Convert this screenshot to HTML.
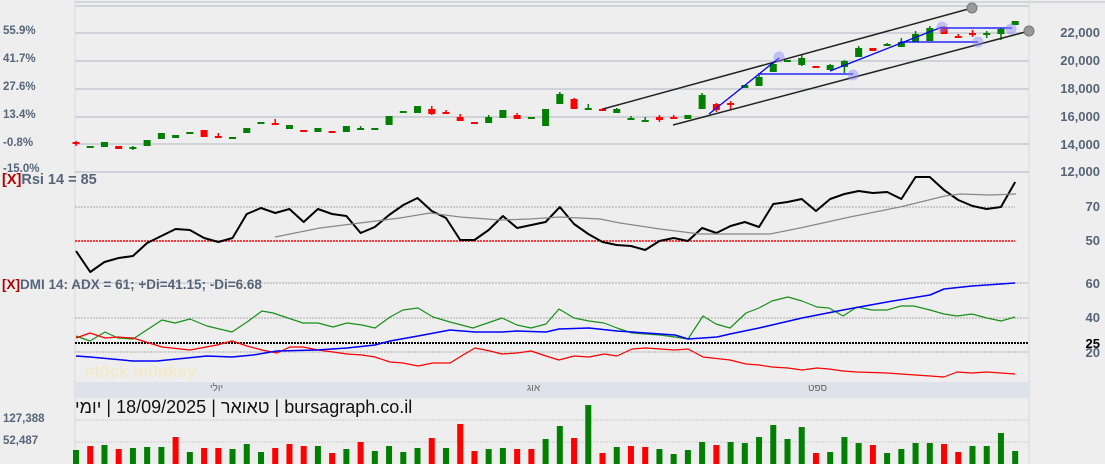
<!DOCTYPE html>
<html><head><meta charset="utf-8">
<style>
html,body{margin:0;padding:0;background:#eeeeee;}
body{width:1105px;height:464px;overflow:hidden;position:relative;font-family:"Liberation Sans",sans-serif;}
svg{position:absolute;left:0;top:0;}
.t{position:absolute;white-space:nowrap;}
.ax{font-size:13px;font-weight:bold;color:#56657a;text-align:right;width:60px;left:1040px;}
.lx{font-size:11.5px;font-weight:bold;color:#56657a;left:3px;}
.title{position:absolute;left:75px;top:397px;font-size:18px;color:#111;white-space:nowrap;}
.title span{display:inline-block;}
</style></head><body>
<svg id="s" width="1105" height="464" xmlns="http://www.w3.org/2000/svg">
<rect x="0" y="0" width="1105" height="464" fill="#eeeeee"/>
<line x1="75" y1="2" x2="1105" y2="2" stroke="#d4d6da" stroke-width="2"/>
<line x1="75" y1="0" x2="75" y2="464" stroke="#dadada" stroke-width="1"/>
<line x1="1029" y1="0" x2="1029" y2="464" stroke="#dadada" stroke-width="1"/>
<g stroke="#cfd2d8" stroke-width="2">
<line x1="75" y1="6" x2="1029" y2="6"/><line x1="75" y1="33" x2="1029" y2="33"/>
<line x1="75" y1="61" x2="1029" y2="61"/><line x1="75" y1="89" x2="1029" y2="89"/>
<line x1="75" y1="117" x2="1029" y2="117"/><line x1="75" y1="144" x2="1029" y2="144"/>
<line x1="75" y1="172" x2="1029" y2="172"/>
</g>
<g stroke="#aaa" stroke-width="1" stroke-dasharray="2,1">
<line x1="75" y1="207" x2="1015" y2="207"/>
<line x1="75" y1="283" x2="1029" y2="283"/><line x1="75" y1="318" x2="1029" y2="318"/>
<line x1="75" y1="352" x2="1029" y2="352"/>
<line x1="75" y1="420" x2="1029" y2="420" stroke="#ccc"/><line x1="75" y1="442" x2="1029" y2="442" stroke="#ccc"/>
</g>
<line x1="75" y1="241" x2="1015" y2="241" stroke="#f00" stroke-width="1.5" stroke-dasharray="2,1"/>
<line x1="75" y1="343" x2="1029" y2="343" stroke="#000" stroke-width="2" stroke-dasharray="2,1"/>
<rect x="75" y="382" width="954" height="16" fill="#dee2ea"/>
<text x="85" y="377" font-family="Liberation Sans" font-weight="bold" font-size="17" fill="#f5e6b4" opacity="0.6">st0ck m0nkey</text>
<g id="c"></g>
</svg>
<div class="t lx" style="top:25px">55.9%</div>
<div class="t lx" style="top:53px">41.7%</div>
<div class="t lx" style="top:81px">27.6%</div>
<div class="t lx" style="top:109px">13.4%</div>
<div class="t lx" style="top:137px">-0.8%</div>
<div class="t lx" style="top:163px">-15.0%</div>
<div class="t lx" style="top:413px">127,388</div>
<div class="t lx" style="top:435px">52,487</div>
<div class="t" style="left:2px;top:172px;font-size:14.5px;color:#56657a;font-weight:bold"><span style="color:#b00000">[X]</span>Rsi 14 = 85</div>
<div class="t" style="left:2px;top:277px;font-size:13.5px;color:#56657a;font-weight:bold"><span style="color:#b00000">[X]</span>DMI 14: ADX = 61; +Di=41.15; -Di=6.68</div>
<div class="t ax" style="top:25px">22,000</div>
<div class="t ax" style="top:53px">20,000</div>
<div class="t ax" style="top:81px">18,000</div>
<div class="t ax" style="top:109px">16,000</div>
<div class="t ax" style="top:137px">14,000</div>
<div class="t ax" style="top:164px">12,000</div>
<div class="t ax" style="top:199px">70</div>
<div class="t ax" style="top:233px">50</div>
<div class="t ax" style="top:276px">60</div>
<div class="t ax" style="top:310px">40</div>
<div class="t ax" style="top:336px;color:#000">25</div>
<div class="t ax" style="top:345px">20</div>
<div class="t" style="left:210px;top:383px;font-size:10px;color:#666">יולי</div>
<div class="t" style="left:527px;top:383px;font-size:10px;color:#666">אוג</div>
<div class="t" style="left:808px;top:383px;font-size:10px;color:#666">ספט</div>
<div class="title" dir="ltr"><span>יומי</span> | <span>18/09/2025</span> | <span>טאואר</span> | <span>bursagraph.co.il</span></div>
<script>
var g=document.getElementById('c'),NS='http://www.w3.org/2000/svg';
function el(t,a){var e=document.createElementNS(NS,t);for(var k in a)e.setAttribute(k,a[k]);g.appendChild(e);return e;}
function X(i){return 76+i*14.23;}
var C=[[142,144,141,146,'r'],[146,148,0,0,'g'],[142,147,0,0,'g'],[146,149,0,0,'r'],[147,149,146,150,'g'],[140,146,0,0,'g'],[133,139,0,0,'g'],[135,138,0,0,'g'],[132,134,0,0,'g'],[130,137,0,0,'r'],[136,138,133,138,'r'],[137,138,0,0,'g'],[128,133,0,0,'g'],[122,124,0,0,'g'],[123,125,119,125,'r'],[125,129,0,0,'g'],[130,131,0,0,'r'],[128,132,0,0,'g'],[131,132,0,0,'r'],[126,132,0,0,'g'],[128,130,126,130,'g'],[128,130,0,0,'g'],[116,125,0,0,'g'],[111,113,0,0,'g'],[106,113,0,0,'g'],[109,114,106,115,'r'],[112,113,110,113,'r'],[117,121,114,121,'r'],[122,124,0,0,'r'],[117,123,115,123,'g'],[110,118,0,0,'g'],[115,119,113,119,'r'],[117,119,0,0,'g'],[109,126,0,0,'g'],[94,104,92,104,'g'],[99,109,98,109,'r'],[108,109,104,109,'g'],[109,111,108,111,'r'],[109,113,108,113,'g'],[118,119,116,119,'g'],[120,121,117,121,'g'],[117,120,115,122,'r'],[117,118,115,118,'r'],[115,119,0,0,'g'],[95,109,93,109,'g'],[104,110,103,112,'r'],[103,104,101,110,'r'],[85,88,0,0,'g'],[77,86,75,86,'g'],[64,72,62,72,'g'],[60,62,0,0,'g'],[58,65,55,66,'g'],[66,68,0,0,'r'],[65,70,64,70,'g'],[61,67,60,73,'g'],[48,57,46,57,'g'],[48,51,0,0,'r'],[44,46,43,46,'g'],[42,47,38,47,'g'],[34,42,31,42,'g'],[28,41,26,41,'g'],[27,34,26,34,'r'],[36,38,34,38,'r'],[33,35,30,37,'r'],[33,35,31,38,'g'],[29,34,28,40,'g'],[21,25,0,0,'g']];
C.forEach(function(c,i){var x=X(i),col=c[4]=='g'?'#007f00':'#f00';
 if(c[2])el('line',{x1:x,x2:x,y1:c[2],y2:c[3],stroke:col,'stroke-width':1.5});
 el('rect',{x:x-3.5,y:c[0],width:7,height:Math.max(2,c[1]-c[0]),fill:col});});
var V=[[450,'g'],[446,'r'],[445,'g'],[449,'r'],[448,'g'],[447,'g'],[447,'g'],[437,'r'],[452,'g'],[448,'r'],[448,'r'],[449,'g'],[444,'g'],[452,'g'],[448,'r'],[444,'r'],[446,'r'],[446,'g'],[453,'r'],[449,'g'],[442,'r'],[451,'g'],[446,'g'],[452,'g'],[448,'g'],[438,'r'],[448,'g'],[424,'r'],[451,'r'],[449,'g'],[448,'g'],[449,'r'],[449,'r'],[439,'g'],[426,'g'],[438,'r'],[405,'g'],[453,'r'],[447,'g'],[446,'r'],[447,'r'],[449,'g'],[454,'g'],[450,'g'],[442,'g'],[445,'r'],[442,'g'],[443,'g'],[437,'g'],[425,'g'],[439,'g'],[427,'g'],[453,'r'],[452,'g'],[437,'g'],[443,'g'],[445,'r'],[453,'g'],[449,'g'],[443,'g'],[443,'g'],[444,'r'],[452,'r'],[446,'g'],[446,'g'],[433,'g'],[451,'g']];
V.forEach(function(v,i){el('rect',{x:X(i)-3,y:v[0],width:6,height:464-v[0],fill:v[1]=='g'?'#007f00':'#f00'});});
function pl(p,col,w){el('polyline',{points:p,fill:'none',stroke:col,'stroke-width':w,'stroke-linejoin':'round'});}
var rsi=[251,272,262,258,256,243,236,229,230,238,242,238,214,208,213,209,222,209,214,216,233,227,215,205,198,211,218,240,240,230,216,228,225,222,207,224,234,242,245,246,250,241,238,241,228,233,226,222,227,204,202,199,211,199,194,191,193,192,199,177,177,190,200,206,209,207,182];
pl(rsi.map(function(y,i){return X(i)+','+y;}).join(' '),'#000',2);
pl('275,237 320,228 360,223 400,218 430,213 460,217 500,220 530,219 560,217 600,219 620,223 660,229 700,234 770,234 800,228 850,217 900,207 945,196 960,194 990,195 1016,194','#888',1.2);
pl('76,336 90,341 105,332 118,338 133,339 162,320 175,323 190,319 207,326 232,332 247,322 262,311 273,313 288,318 303,323 318,323 333,327 347,323 362,325 375,328 390,317 403,310 418,308 433,317 450,322 473,328 502,318 517,325 531,328 546,324 559,309 574,318 589,321 604,323 617,328 632,333 646,334 660,335 675,337 688,339 703,316 716,324 730,328 746,313 759,308 772,301 788,297 802,301 817,307 829,308 843,316 857,307 872,310 887,310 901,306 914,306 930,310 944,314 957,316 972,314 987,318 1001,321 1015,317','#1a8f1a',1.2);
pl('76,338 90,333 105,338 118,337 133,338 162,347 190,350 217,345 232,341 247,346 262,350 277,353 290,347 303,347 318,350 333,352 347,354 362,355 375,357 390,362 403,363 418,366 433,363 450,363 463,355 475,348 490,351 502,354 517,353 531,351 546,356 559,360 574,356 589,357 604,354 617,356 632,349 646,348 660,349 675,350 688,349 703,357 730,360 746,364 759,365 772,367 788,368 802,370 817,368 829,369 843,371 857,372 887,373 901,374 930,376 944,377 957,372 972,373 987,372 1001,373 1015,374','#f00',1.2);
pl('76,356 90,357 133,361 157,361 177,359 207,356 232,357 253,355 277,351 317,350 347,348 375,345 390,341 418,336 450,330 475,332 502,332 517,331 546,332 559,329 589,328 617,331 646,333 675,335 688,339 717,337 730,334 759,328 772,325 802,318 843,310 887,302 930,295 944,289 972,286 1015,283','#00f',1.5);
pl('603,109 972,8','#222',1.5);pl('673,125 1029,31','#222',1.5);
el('circle',{cx:972,cy:8,r:5,fill:'#999',stroke:'#777'});el('circle',{cx:1029,cy:31,r:5,fill:'#999',stroke:'#777'});
pl('709,114 779,58','#00f',1.3);pl('758,74 853,74','#00f',1.3);pl('830,71 942,27','#00f',1.3);pl('900,42 978,42','#00f',1.3);pl('942,28 1012,28','#00f',1.3);
[[779,57],[853,75],[942,27],[978,42],[1011,29]].forEach(function(p){el('circle',{cx:p[0],cy:p[1],r:5.5,fill:'#8888ff','fill-opacity':0.45});});
</script>
</body></html>
